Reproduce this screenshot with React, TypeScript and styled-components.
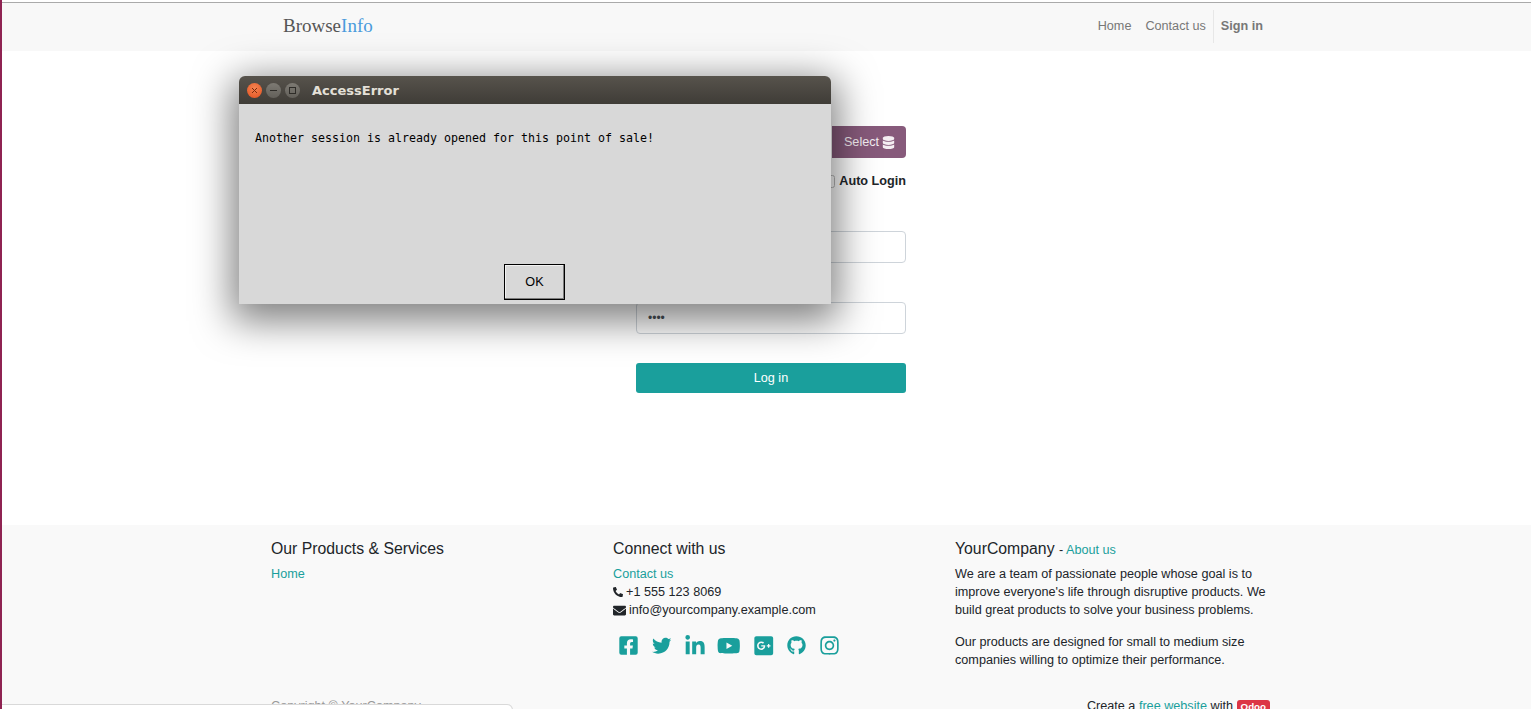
import React from "react";
import styled, { createGlobalStyle } from "styled-components";
import {
  FaFacebookSquare, FaTwitter, FaLinkedinIn, FaYoutube, FaGooglePlusSquare,
  FaGithub, FaInstagram, FaPhoneAlt, FaEnvelope, FaDatabase,
} from "react-icons/fa";

const Global = createGlobalStyle`
  html, body { margin: 0; padding: 0; background: #fff; overflow: hidden; }
  body { font-family: "Liberation Sans", Arial, sans-serif; font-size: 12.65px; line-height: 18px; color: #212529; }
  * { box-sizing: border-box; }
`;

const Page = styled.div`
  position: relative;
  width: 1531px;
  height: 709px;
  overflow: hidden;
  border-left: 2px solid #8f2352;
  padding-top: 2px;
  display: flex;
  flex-direction: column;
`;
const EdgeTick = styled.i`
  position: absolute;
  left: -2px;
  top: 669px;
  width: 1px;
  height: 6px;
  background: #d8d8d8;
`;

const Navbar = styled.header`
  height: 49px;
  flex: none;
  background: #f8f8f8;
  border-top: 1px solid #aaa;
`;
const NavInner = styled.div`
  width: 1030px;
  margin-left: 254px;
  padding: 0 23px 2px 27px;
  height: 100%;
  display: flex;
  align-items: center;
  justify-content: space-between;
`;
const Brand = styled.div`
  font-family: "Liberation Serif", "Times New Roman", serif;
  font-size: 19px;
  color: #555;
  span { color: #4a9bdc; }
`;
const NavLinks = styled.nav`
  display: flex;
  align-items: center;
  color: #777;
`;
const NavLink = styled.a<{ $bold?: boolean }>`
  margin-left: ${(p) => (p.$bold ? "0" : "14px")};
  font-weight: ${(p) => (p.$bold ? 700 : 400)};
`;
const NavDivider = styled.i`
  width: 1px;
  height: 33px;
  margin: 0 7px;
  background: #e7e7e7;
`;

const Main = styled.main`
  flex: 1;
  display: flex;
  justify-content: center;
  margin-left: 9px;
  padding-top: 75px;
`;
const Form = styled.div`
  width: 270px;
  display: flex;
  flex-direction: column;
`;
const SelectRow = styled.div`
  display: flex;
  justify-content: flex-end;
`;
const SelectBtn = styled.button`
  width: 74px;
  height: 32px;
  border: 0;
  border-radius: 0 4px 4px 0;
  background: #875a7b;
  color: #f4eef2;
  font: inherit;
  display: flex;
  align-items: center;
  justify-content: center;
  gap: 3px;
  padding: 0 0 0 1px;
`;
const AutoRow = styled.label`
  display: flex;
  justify-content: flex-end;
  align-items: center;
  gap: 4px;
  margin-top: 14px;
  font-weight: 700;
  color: #212529;
`;
const Check = styled.input`
  width: 13px;
  height: 13px;
  margin: 0;
  opacity: 0.5;
`;
const Field = styled.div<{ $top: number }>`
  height: 32px;
  margin-top: ${(p) => p.$top}px;
  border: 1px solid #ced4da;
  border-radius: 4px;
  background: #fff;
  padding: 0 11px;
  display: flex;
  align-items: center;
  font-size: 12px;
  color: #495057;
`;
const LogIn = styled.button`
  height: 30px;
  margin-top: 29px;
  border: 0;
  border-radius: 3px;
  background: #1a9f9c;
  color: #fff;
  font: inherit;
`;

const Footer = styled.footer`
  flex: none;
  height: 184px;
  background: #f9f9f9;
  overflow: hidden;
`;
const FooterInner = styled.div`
  width: 1030px;
  margin-left: 254px;
  padding: 14px 15px 0;
  display: grid;
  grid-template-columns: 342px 342px 316px;
`;
const Col = styled.div`
  display: flex;
  flex-direction: column;
  min-height: 150px;
`;
const Heading = styled.h5<{ $tight?: boolean }>`
  margin: 0 0 ${(p) => (p.$tight ? 5 : 7)}px;
  font-size: 15.8px;
  line-height: 19px;
  font-weight: 400;
  color: #212529;
  small { font-size: 12.65px; }
`;
const TealLink = styled.a`
  color: #1a9f9c;
`;
const Line = styled.div`
  display: flex;
  align-items: center;
  gap: 3px;
`;
const Para = styled.p`
  margin: 0 0 14px;
`;
const Socials = styled.div`
  display: flex;
  align-items: center;
  margin: 16px 0 0 -1.5px;
  height: 21px;
  color: #1a9f9c;
`;
const SocialCell = styled.span<{ $w: number }>`
  width: ${(p) => p.$w}px;
  flex: none;
  display: flex;
  justify-content: center;
`;
const Copyright = styled.div`
  color: #999;
  padding-top: 8px;
`;
const Credit = styled.div`
  text-align: right;
  padding: 8px 1px 0 0;
`;
const Badge = styled.span`
  display: inline-block;
  background: #dc3545;
  color: #fff;
  font-size: 9.75px;
  font-weight: 700;
  line-height: 10px;
  padding: 2px 4px;
  border-radius: 3px;
`;
const BottomBar = styled.div`
  position: absolute;
  left: 0;
  bottom: -12px;
  width: 511px;
  height: 17px;
  background: #fff;
  border: 1px solid #d9d9d9;
  border-left: 0;
  border-radius: 0 6px 6px 0;
`;

const Dialog = styled.section`
  position: absolute;
  left: 237px;
  top: 76px;
  width: 592px;
  height: 228px;
  background: #d8d8d8;
  border-radius: 6px 6px 0 0;
  box-shadow: 0 10px 38px 7px rgba(0, 0, 0, 0.5);
  display: flex;
  flex-direction: column;
`;
const TitleBar = styled.div`
  height: 28px;
  flex: none;
  border-radius: 6px 6px 0 0;
  background: linear-gradient(#57534c, #3f3c37);
  display: flex;
  align-items: center;
  padding-left: 8px;
  gap: 4px;
`;
const WinBtn = styled.span<{ $close?: boolean }>`
  width: 15px;
  height: 15px;
  border-radius: 50%;
  flex: none;
  display: flex;
  align-items: center;
  justify-content: center;
  background: ${(p) =>
    p.$close ? "radial-gradient(circle at 50% 35%, #f58452, #e2511f)" : "linear-gradient(#7d7a73, #63605a)"};
  color: ${(p) => (p.$close ? "#7a2a0c" : "#2e2c28")};
`;
const Title = styled.div`
  margin: 1px 0 0 8px;
  font-family: "DejaVu Sans", sans-serif;
  font-size: 13px;
  font-weight: 700;
  color: #e4e0d8;
`;
const DialogBody = styled.div`
  flex: 1;
  padding: 26px 16px 0;
  font-family: "DejaVu Sans Mono", monospace;
  font-size: 11.63px;
  line-height: 17px;
  color: #000;
`;
const DialogFoot = styled.div`
  display: flex;
  justify-content: center;
  padding: 0 2px 4px 0;
`;
const OkBtn = styled.button`
  width: 61px;
  height: 36px;
  background: #d8d8d8;
  border: 1px solid #000;
  outline: none;
  box-shadow: inset -1px -1px 0 #7d7d7d, inset 1px 1px 0 #f2f2f2;
  font-family: "Liberation Sans", sans-serif;
  font-size: 12.65px;
  color: #000;
  padding: 0 0 0 1px;
`;

const socials = [
  { Icon: FaFacebookSquare, size: 21, w: 33 },
  { Icon: FaTwitter, size: 19.5, w: 34 },
  { Icon: FaLinkedinIn, size: 22, w: 33 },
  { Icon: FaYoutube, size: 23.5, w: 35 },
  { Icon: FaGooglePlusSquare, size: 21.5, w: 34 },
  { Icon: FaGithub, size: 19, w: 31 },
  { Icon: FaInstagram, size: 21, w: 35 },
];

export default function App() {
  return (
    <>
      <Global />
      <Page>
        <Navbar>
          <NavInner>
            <Brand>Browse<span>Info</span></Brand>
            <NavLinks>
              <NavLink>Home</NavLink>
              <NavLink>Contact us</NavLink>
              <NavDivider />
              <NavLink $bold>Sign in</NavLink>
            </NavLinks>
          </NavInner>
        </Navbar>
        <Main>
          <Form>
            <SelectRow>
              <SelectBtn>Select <FaDatabase size={13} /></SelectBtn>
            </SelectRow>
            <AutoRow><Check type="checkbox" />Auto Login</AutoRow>
            <Field $top={41} />
            <Field $top={39}>••••</Field>
            <LogIn>Log in</LogIn>
          </Form>
        </Main>
        <Footer>
          <FooterInner>
            <Col>
              <Heading>Our Products &amp; Services</Heading>
              <TealLink>Home</TealLink>
            </Col>
            <Col>
              <Heading>Connect with us</Heading>
              <TealLink>Contact us</TealLink>
              <Line><FaPhoneAlt size={10} />+1 555 123 8069</Line>
              <Line><FaEnvelope size={13} />info@yourcompany.example.com</Line>
              <Socials>
                {socials.map(({ Icon, size, w }, i) => (
                  <SocialCell key={i} $w={w}><Icon size={size} /></SocialCell>
                ))}
              </Socials>
            </Col>
            <Col>
              <Heading $tight>YourCompany <small>- <TealLink>About us</TealLink></small></Heading>
              <Para>We are a team of passionate people whose goal is to improve everyone's life through disruptive products. We build great products to solve your business problems.</Para>
              <Para>Our products are designed for small to medium size companies willing to optimize their performance.</Para>
            </Col>
            <Copyright>Copyright © YourCompany</Copyright>
            <div />
            <Credit>Create a <TealLink>free website</TealLink> with <Badge>Odoo</Badge></Credit>
          </FooterInner>
        </Footer>
        <BottomBar />
        <EdgeTick />
        <Dialog>
          <TitleBar>
            <WinBtn $close>
              <svg width="7" height="7" viewBox="0 0 7 7"><path d="M1 1l5 5M6 1L1 6" stroke="currentColor" strokeWidth="1" /></svg>
            </WinBtn>
            <WinBtn>
              <svg width="7" height="7" viewBox="0 0 7 7"><path d="M0 3.5h7" stroke="currentColor" strokeWidth="1" /></svg>
            </WinBtn>
            <WinBtn>
              <svg width="7" height="7" viewBox="0 0 7 7"><rect x="0.5" y="0.5" width="6" height="6" fill="none" stroke="currentColor" /></svg>
            </WinBtn>
            <Title>AccessError</Title>
          </TitleBar>
          <DialogBody>Another session is already opened for this point of sale!</DialogBody>
          <DialogFoot><OkBtn>OK</OkBtn></DialogFoot>
        </Dialog>
      </Page>
    </>
  );
}
